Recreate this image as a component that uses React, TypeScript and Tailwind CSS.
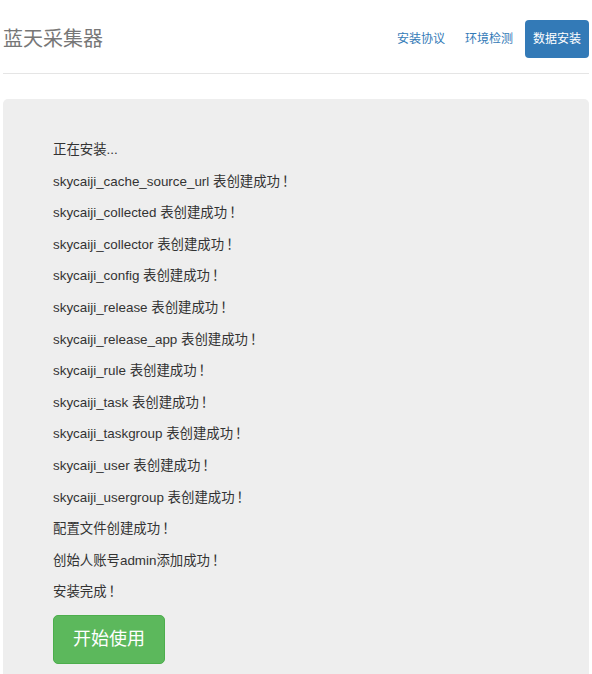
export default function App() {
  const lines = [
    '正在安装...',
    'skycaiji_cache_source_url 表创建成功！',
    'skycaiji_collected 表创建成功！',
    'skycaiji_collector 表创建成功！',
    'skycaiji_config 表创建成功！',
    'skycaiji_release 表创建成功！',
    'skycaiji_release_app 表创建成功！',
    'skycaiji_rule 表创建成功！',
    'skycaiji_task 表创建成功！',
    'skycaiji_taskgroup 表创建成功！',
    'skycaiji_user 表创建成功！',
    'skycaiji_usergroup 表创建成功！',
    '配置文件创建成功！',
    '创始人账号admin添加成功！',
    '安装完成！',
  ];

  return (
    <div
      className="h-[674px] overflow-hidden bg-white px-[3px] text-[#333]"
      style={{ fontFamily: '"Liberation Sans", Arial, "Noto Sans CJK SC", sans-serif' }}
    >
      {/* Header */}
      <div className="flex h-[74px] items-center justify-between border-b border-[#e5e5e5] pt-[4px]">
        <h3 className="text-[20px] leading-none text-[#777]">蓝天采集器</h3>
        <ul className="flex items-center gap-[4px] text-[12px]">
          <li>
            <a className="block rounded-[4px] px-[8px] py-[10px] text-[#337ab7]">安装协议</a>
          </li>
          <li>
            <a className="block rounded-[4px] px-[8px] py-[10px] text-[#337ab7]">环境检测</a>
          </li>
          <li>
            <a className="block rounded-[4px] bg-[#337ab7] px-[8px] py-[10px] text-white">数据安装</a>
          </li>
        </ul>
      </div>

      {/* Install log */}
      <div className="mt-[25px] h-[620px] rounded-[5px] bg-[#eeeeee] px-[50px] pt-[41px]">
        {lines.map((line) => (
          <p key={line} className="h-[31.6px] text-[13.4px] leading-[20px]">
            {line.endsWith('！') ? (
              <>
                {line.slice(0, -1)}
                <span className="ml-[2px]">！</span>
              </>
            ) : (
              line
            )}
          </p>
        ))}
        <button className="mt-[1px] h-[49px] w-[112px] rounded-[5px] border border-[#4cae4c] bg-[#5cb85c] text-[18px] text-white">
          开始使用
        </button>
      </div>
    </div>
  );
}
